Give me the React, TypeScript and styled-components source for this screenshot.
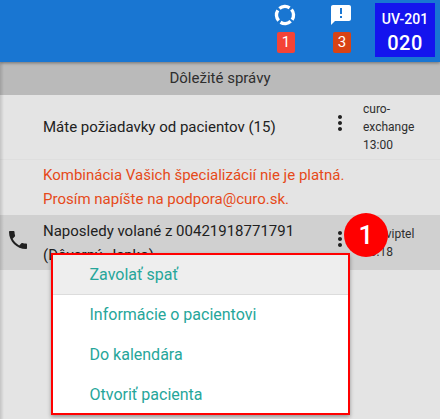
import React from "react";
import styled, { createGlobalStyle } from "styled-components";

const Global = createGlobalStyle`
  html, body { margin: 0; padding: 0; width: 440px; height: 419px; overflow: hidden; }
  body { font-family: Roboto, "Noto Sans", sans-serif; background: #e4e4e4; }
`;
const Page = styled.div`
  position: relative; width: 440px; height: 419px; overflow: hidden;
  display: flex; flex-direction: column; background: #e4e4e4;
  &::before {
    content: ""; position: absolute; left: 0; top: 62px; bottom: 0; width: 4px; z-index: 2;
    background: linear-gradient(to right, rgba(0,0,0,.14), rgba(0,0,0,0));
  }
`;
const TopBar = styled.header`
  height: 62px; flex: none; background: #1976d2; box-shadow: 0 1px 3px rgba(0,0,0,.4);
  position: relative; z-index: 1;
  display: flex; justify-content: flex-end; align-items: flex-start; padding: 3px 5px 0 0; box-sizing: border-box;
`;
const Stat = styled.div`
  width: 56px; display: flex; flex-direction: column; align-items: center; margin-right: ${p => p.$mr}px;
`;
const IconSlot = styled.div`
  height: 24px; padding-right: 2px; display: flex; align-items: center; justify-content: center;
`;
const Badge = styled.div`
  width: 18px; height: 21px; margin-top: 5px; border-radius: 2px; background: ${p => p.$bg}; color: #fff;
  font-size: 15px; line-height: 21px; text-align: center;
`;
const Station = styled.div`
  width: 60px; height: 54px; background: #1414ee; color: #fff; text-align: center; font-weight: 500;
  display: flex; flex-direction: column; align-items: center;
`;
const StationName = styled.div`font-size: 14px; line-height: 18px; margin-top: 7px;`;
const StationNum = styled.div`font-size: 20px; line-height: 24px; margin-top: 3px; letter-spacing: .4px;`;
const SectionTitle = styled.div`
  height: 33px; flex: none; background: #bababa; color: #2e2e2e; font-size: 15px; line-height: 32px; text-align: center;
`;
const Row = styled.div`
  display: flex; align-items: center; height: ${p => p.$h}px; flex: none; box-sizing: border-box;
  background: ${p => p.$bg || "transparent"};
  border-bottom: ${p => p.$line ? "1px solid #dedede" : "none"};
`;
const Lead = styled.div`width: 43px; flex: none; display: flex; justify-content: center; padding: 0 8px 6px 0; box-sizing: border-box;`;
const RowText = styled.div`flex: 1; min-width: 0; font-size: 15px; line-height: 24px; color: #212121;`;
const Dots = styled.div`width: 24px; flex: none; padding-bottom: 8px; display: flex; justify-content: center;`;
const Side = styled.div`width: 88px; flex: none; padding-left: 11px; box-sizing: border-box; font-size: 12px; line-height: 18px; color: #2e2e2e;`;
const Warning = styled.div`
  height: 55px; flex: none; padding: 3px 0 0 43px; box-sizing: border-box;
  font-size: 15px; line-height: 24px; color: #e64a19;
`;
const Menu = styled.div`
  position: absolute; left: 51px; top: 253px; width: 299px; height: 162px; box-sizing: border-box;
  border: 2px solid #f00; background: #fff; box-shadow: 0 2px 4px rgba(0,0,0,.35); z-index: 3;
`;
const MenuItem = styled.div`
  height: 40px; box-sizing: border-box; padding-left: 36.5px; font-size: 16px; line-height: 40px; color: #26a69a;
  background: ${p => p.$active ? "#eeeeee" : "transparent"};
  border-bottom: ${p => p.$active ? "1px solid #dcdcdc" : "none"};
`;
const Marker = styled.div`
  position: absolute; left: 344px; top: 213px; width: 44px; height: 44px; border-radius: 50%;
  background: #f00; color: #fff; font-size: 26px; font-weight: 500; line-height: 44px; text-align: center; z-index: 4;
`;

const MoreDots = () => (
  <svg width="24" height="24" viewBox="0 0 24 24" fill="#212121" aria-hidden="true">
    <path d="M12 8c1.1 0 2-.9 2-2s-.9-2-2-2-2 .9-2 2 .9 2 2 2zm0 2c-1.1 0-2 .9-2 2s.9 2 2 2 2-.9 2-2-.9-2-2-2zm0 6c-1.1 0-2 .9-2 2s.9 2 2 2 2-.9 2-2-.9-2-2-2z" />
  </svg>
);

export default function App() {
  return (
    <Page>
      <Global />
      <TopBar>
        <Stat $mr={0}>
          <IconSlot>
            <svg width="24" height="24" viewBox="0 0 24 24" fill="none" aria-hidden="true">
              <circle cx="12" cy="12" r="8.5" stroke="#fff" strokeWidth="3.4" strokeDasharray="10.85 2.5" transform="rotate(48 12 12)" />
            </svg>
          </IconSlot>
          <Badge $bg="#f44336">1</Badge>
        </Stat>
        <Stat $mr={5}>
          <IconSlot>
            <svg width="24" height="24" viewBox="0 0 24 24" fill="#fff" aria-hidden="true">
              <path d="M20 2H4c-1.1 0-1.99.9-1.99 2L2 22l4-4h14c1.1 0 2-.9 2-2V4c0-1.1-.9-2-2-2zm-7 9h-2V5h2v6zm0 4h-2v-2h2v2z" />
            </svg>
          </IconSlot>
          <Badge $bg="#d84315">3</Badge>
        </Stat>
        <Station>
          <StationName>UV-201</StationName>
          <StationNum>020</StationNum>
        </Station>
      </TopBar>
      <SectionTitle>Dôležité správy</SectionTitle>
      <Row $h={65} $line>
        <Lead />
        <RowText>Máte požiadavky od pacientov (15)</RowText>
        <Dots><MoreDots /></Dots>
        <Side>curo-<br />exchange<br />13:00</Side>
      </Row>
      <Warning>
        Kombinácia Vašich špecializácií nie je platná.<br />
        Prosím napíšte na podpora@curo.sk.
      </Warning>
      <Row $h={55} $bg="#d0d0d0">
        <Lead>
          <svg width="24" height="24" viewBox="0 0 24 24" fill="#212121" aria-hidden="true">
            <path d="M6.62 10.79c1.44 2.83 3.76 5.14 6.59 6.59l2.2-2.2c.27-.27.67-.36 1.02-.24 1.12.37 2.33.57 3.57.57.55 0 1 .45 1 1V20c0 .55-.45 1-1 1-9.39 0-17-7.61-17-17 0-.55.45-1 1-1h3.5c.55 0 1 .45 1 1 0 1.25.2 2.45.57 3.57.11.35.03.74-.25 1.02l-2.2 2.2z" />
          </svg>
        </Lead>
        <RowText>Naposledy volané z 00421918771791<br />(Dôverný, Janko)</RowText>
        <Dots><MoreDots /></Dots>
        <Side>cco-viptel<br />13:18</Side>
      </Row>
      <Menu>
        <MenuItem $active>Zavolať spať</MenuItem>
        <MenuItem>Informácie o pacientovi</MenuItem>
        <MenuItem>Do kalendára</MenuItem>
        <MenuItem>Otvoriť pacienta</MenuItem>
      </Menu>
      <Marker>1</Marker>
    </Page>
  );
}
